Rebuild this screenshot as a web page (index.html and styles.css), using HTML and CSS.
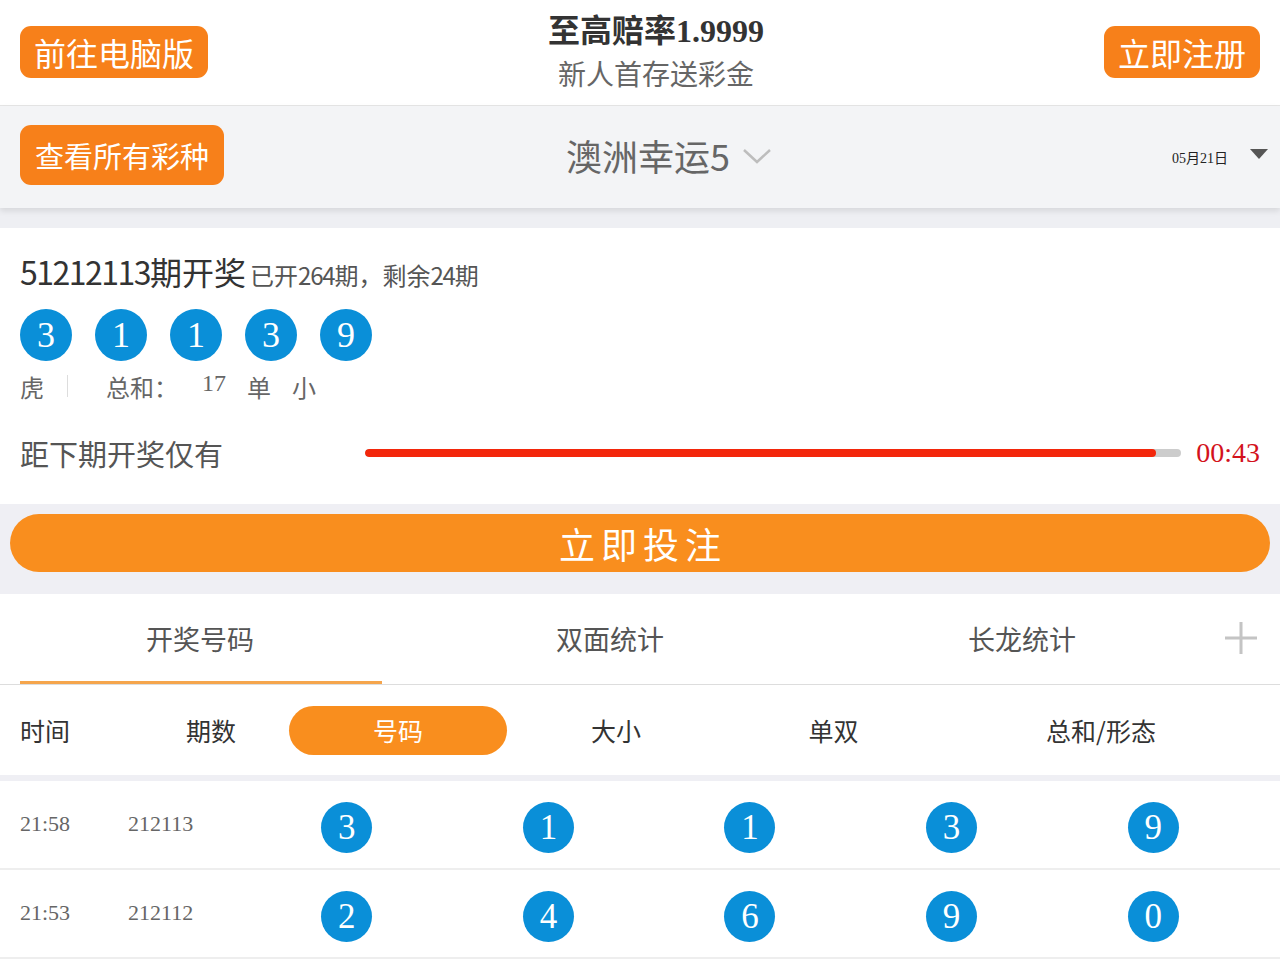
FILE: index.html
```html
<!DOCTYPE html>
<html lang="zh-CN">
<head>
<meta charset="utf-8">
<title>澳洲幸运5</title>
<link rel="stylesheet" href="styles.css">
</head>
<body>
<header class="top">
  <a class="btn btn-top">前往电脑版</a>
  <div class="promo">
    <div class="promo-title">至高赔率<span class="num">1.9999</span></div>
    <div class="promo-sub">新人首存送彩金</div>
  </div>
  <a class="btn btn-top">立即注册</a>
</header>

<div class="lotbar">
  <a class="btn btn-all">查看所有彩种</a>
  <div class="lotname">澳洲幸运5
    <svg class="chev" width="30" height="17" viewBox="0 0 30 17"><polyline points="2,2 15,14 28,2" fill="none" stroke="#bdbdbd" stroke-width="2.5"/></svg>
  </div>
  <div class="date"><span class="date-text">05月21日</span><span class="tri"></span></div>
</div>

<div class="gap"></div>

<section class="draw">
  <div class="draw-title"><span class="issue"><span class="digits">51212113</span>期开奖</span><span class="draw-sub">已开<span class="digits-s">264</span>期，剩余<span class="digits-s">24</span>期</span></div>
  <div class="balls">
    <span class="ball">3</span><span class="ball">1</span><span class="ball">1</span><span class="ball">3</span><span class="ball">9</span>
  </div>
  <div class="stats">
    <span>虎</span><i class="vsep"></i><span class="s-sum">总和：</span><span class="s-num">17</span><span class="s-x">单</span><span class="s-x">小</span>
  </div>
  <div class="countdown">
    <span class="cd-label">距下期开奖仅有</span>
    <div class="bar"><div class="fill" style="width:96.9%"></div></div>
    <span class="cd-time">00:43</span>
  </div>
</section>

<div class="betwrap"><a class="betbtn">立即投注</a></div>

<nav class="tabs">
  <div class="tab active">开奖号码</div>
  <div class="tab">双面统计</div>
  <div class="tab">长龙统计</div>
  <div class="plus">
    <svg width="32" height="32" viewBox="0 0 32 32"><path d="M16 0V32M0 16H32" stroke="#c4c4c4" stroke-width="3"/></svg>
  </div>
</nav>

<div class="subhead">
  <div class="sh sh-left">时间</div>
  <div class="sh">期数</div>
  <div class="sh"><span class="pill">号码</span></div>
  <div class="sh">大小</div>
  <div class="sh">单双</div>
  <div class="sh">总和/形态</div>
</div>

<div class="rows">
  <div class="row">
    <div class="c-time">21:58</div>
    <div class="c-issue">212113</div>
    <div class="c-ball"><span class="ball">3</span></div>
    <div class="c-ball"><span class="ball">1</span></div>
    <div class="c-ball"><span class="ball">1</span></div>
    <div class="c-ball"><span class="ball">3</span></div>
    <div class="c-ball"><span class="ball">9</span></div>
  </div>
  <div class="row">
    <div class="c-time">21:53</div>
    <div class="c-issue">212112</div>
    <div class="c-ball"><span class="ball">2</span></div>
    <div class="c-ball"><span class="ball">4</span></div>
    <div class="c-ball"><span class="ball">6</span></div>
    <div class="c-ball"><span class="ball">9</span></div>
    <div class="c-ball"><span class="ball">0</span></div>
  </div>
</div>
</body>
</html>
```

FILE: styles.css
```css
* { box-sizing: border-box; }
html, body { margin: 0; padding: 0; background: #ffffff; }
body {
  font-family: "Noto Sans CJK SC", "Noto Sans", sans-serif;
  color: #333;
  overflow: hidden;
}
a { text-decoration: none; }

.btn {
  display: inline-flex;
  align-items: center;
  justify-content: center;
  background: #f7801a;
  color: #fff;
  border-radius: 11px;
  white-space: nowrap;
}

/* header */
.top {
  height: 106px;
  display: flex;
  align-items: center;
  justify-content: space-between;
  padding: 0 20px 0 20px;
  border-bottom: 1px solid #e6e6e6;
  background: #fff;
}
.btn-top {
  height: 52px;
  font-size: 32px;
  padding: 0 14px;
  margin-top: -2px;
}
.promo { text-align: center; margin-top: -4px; }
.promo-title {
  font-size: 32px;
  line-height: 36px;
  font-weight: bold;
  color: #333;
}
.promo-title .num { font-family: "Liberation Serif", serif; }
.promo-sub {
  margin-top: 6px;
  font-size: 28px;
  line-height: 36px;
  color: #666;
}

/* lottery bar */
.lotbar {
  height: 102px;
  display: grid;
  grid-template-columns: auto 1fr auto;
  align-items: center;
  padding: 0 12px 0 20px;
  background: #f3f4f6;
  box-shadow: 0 3px 6px rgba(0, 0, 0, 0.10);
  position: relative;
  z-index: 1;
}
.btn-all {
  height: 60px;
  font-size: 29px;
  padding: 0 15px;
  margin-top: -4px;
}
.lotname {
  display: flex;
  align-items: center;
  justify-content: center;
  padding-right: 58px;
  font-size: 36px;
  color: #666;
  margin-top: -4px;
}
.chev { margin-left: 12px; margin-top: 2px; }
.date { display: flex; align-items: center; }
.date-text {
  font-family: "Liberation Serif", "Noto Sans CJK SC", serif;
  font-size: 14px;
  color: #222;
}
.tri {
  width: 0; height: 0;
  margin-left: 22px;
  margin-top: -6px;
  border-left: 9px solid transparent;
  border-right: 9px solid transparent;
  border-top: 10px solid #555;
}

.gap { height: 20px; background: #eeeff3; }

/* draw section */
.draw { padding: 21px 20px 26px 20px; background: #fff; }
.draw-title { line-height: 44px; white-space: nowrap; }
.issue { font-size: 32px; color: #333; }
.digits { letter-spacing: -1.5px; }
.draw-sub { margin-left: 4px; font-size: 24px; color: #555; }
.digits-s { letter-spacing: -1.2px; }
.balls { display: flex; gap: 23px; margin-top: 9px; }
.ball {
  width: 52px;
  height: 52px;
  border-radius: 50%;
  background: #0a8fd8;
  color: #fff;
  display: inline-flex;
  align-items: center;
  justify-content: center;
  font-family: "Liberation Serif", serif;
  font-size: 36px;
  line-height: 1;
}
.stats {
  margin-top: 7px;
  height: 36px;
  display: flex;
  align-items: center;
  font-size: 24px;
  color: #666;
}
.vsep {
  width: 1px;
  height: 22px;
  background: #ddd;
  margin-left: 23px;
}
.s-sum { margin-left: 38px; }
.s-num { margin-left: 24px; font-family: "Liberation Serif", serif; margin-top: -6px; }
.s-x { margin-left: 21px; }

.countdown {
  margin-top: 24px;
  height: 50px;
  display: grid;
  grid-template-columns: 345px 1fr auto;
  align-items: center;
}
.cd-label { font-size: 29px; color: #555; }
.bar {
  height: 8px;
  border-radius: 4px;
  background: #cccccc;
  overflow: hidden;
}
.fill { height: 100%; background: #f3270b; border-radius: 4px; }
.cd-time {
  margin-left: 15px;
  font-family: "Liberation Serif", serif;
  font-size: 28px;
  color: #d3121c;
}

/* bet */
.betwrap { background: #efeff4; padding: 10px 10px 22px 10px; }
.betbtn {
  display: flex;
  height: 58px;
  align-items: center;
  justify-content: center;
  border-radius: 29px;
  background: #f98e1e;
  color: #fff;
  font-size: 36px;
  letter-spacing: 6px;
  text-indent: 6px;
}

/* tabs */
.tabs {
  display: grid;
  grid-template-columns: 400px 420px 404px 1fr;
  height: 91px;
  border-bottom: 1px solid #dddddd;
  background: #fff;
}
.tab {
  display: flex;
  align-items: center;
  justify-content: center;
  font-size: 27px;
  color: #555;
  position: relative;
  padding-bottom: 2px;
}
.tab.active::after {
  content: "";
  position: absolute;
  left: 20px;
  right: 18px;
  bottom: 0;
  height: 3px;
  background: #f5a54c;
}
.plus { display: flex; align-items: center; padding-left: 1px; padding-bottom: 2px; }

/* subhead */
.subhead {
  display: grid;
  grid-template-columns: 113px 156px 218px 218px 217px 1fr;
  align-items: center;
  height: 96px;
  padding: 0 20px;
  border-bottom: 6px solid #efeff4;
  background: #fff;
}
.sh { text-align: center; font-size: 25px; color: #333; }
.sh-left { text-align: left; }
.pill {
  display: flex;
  height: 49px;
  align-items: center;
  justify-content: center;
  border-radius: 25px;
  background: #f98e1e;
  color: #fff;
}

/* rows */
.row {
  display: grid;
  grid-template-columns: 108px 118px repeat(5, 1fr);
  align-items: center;
  height: 89px;
  padding: 5px 26px 0 20px;
  border-bottom: 2px solid #eeeeee;
}
.c-time, .c-issue {
  font-family: "Liberation Serif", serif;
  font-size: 22px;
  color: #666;
  margin-top: -6px;
}
.c-ball { display: flex; justify-content: center; }
.c-ball .ball { width: 51px; height: 51px; font-size: 35px; }
```
